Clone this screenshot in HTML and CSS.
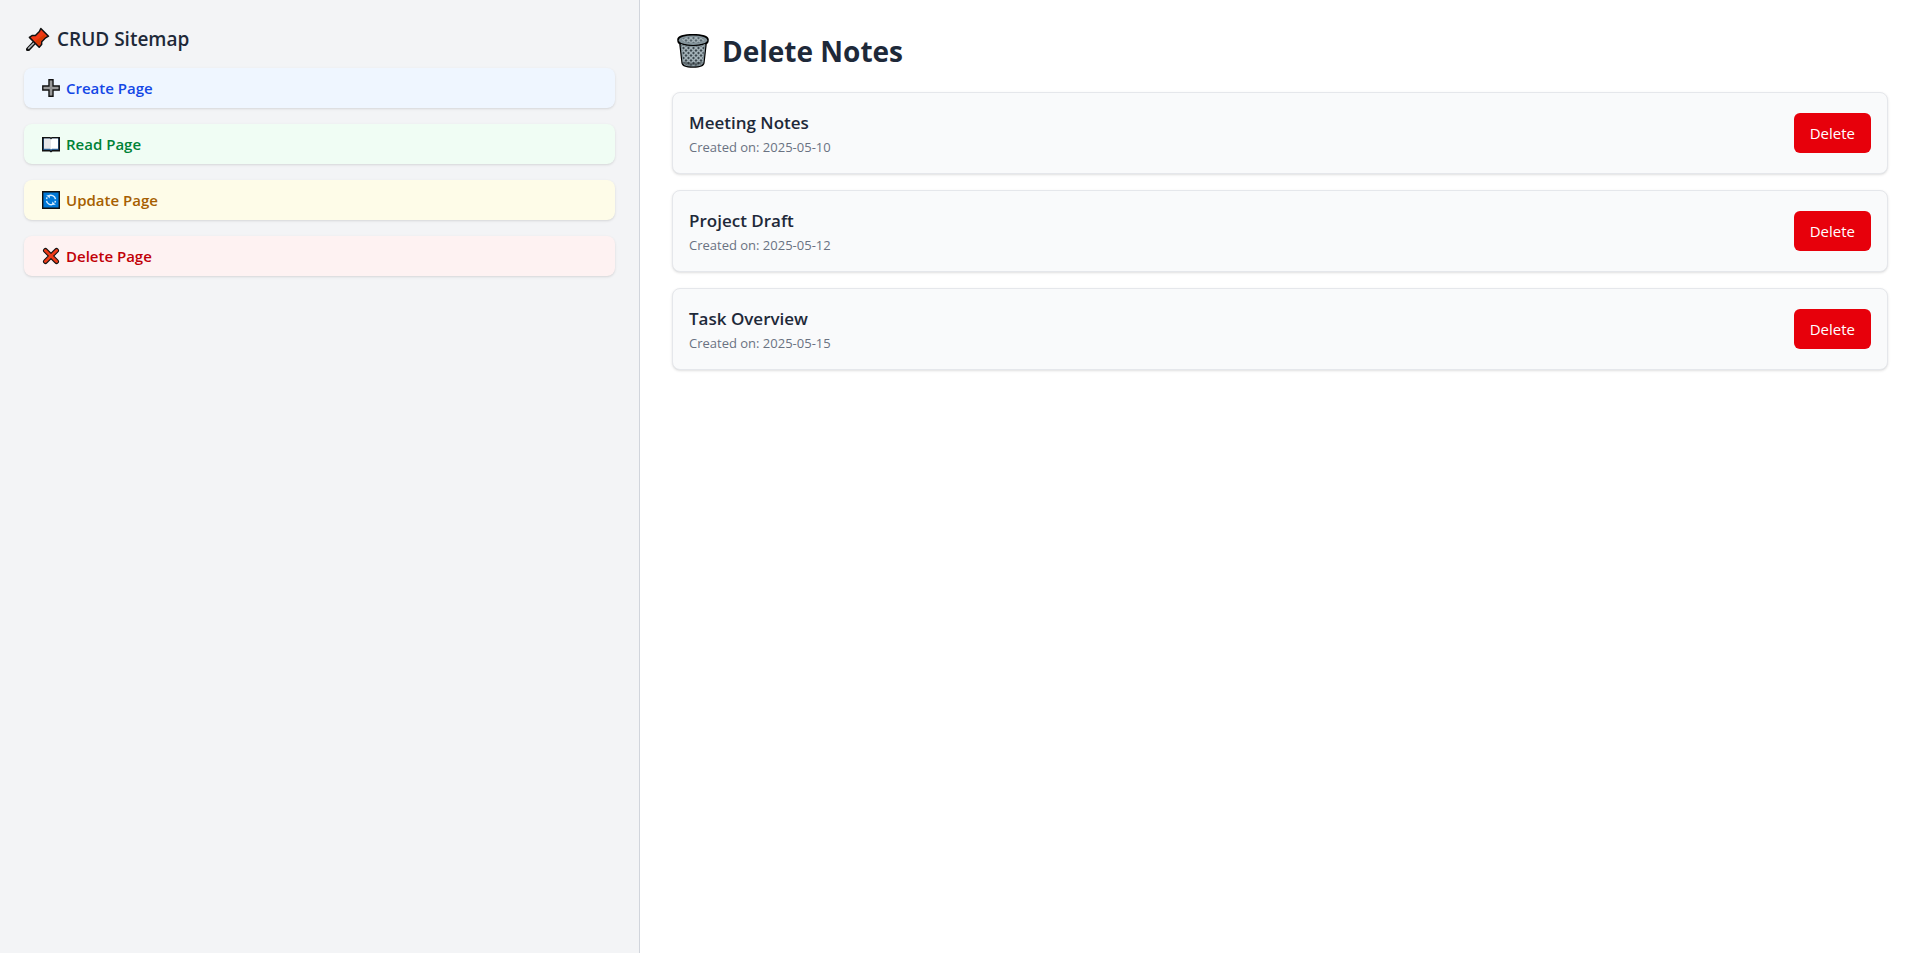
FILE: index.html
```html
<!DOCTYPE html>
<html lang="en">
<head>
<meta charset="utf-8">
<meta name="viewport" content="width=device-width, initial-scale=1">
<title>Delete Notes</title>
<link rel="stylesheet" href="styles.css">
</head>
<body>
<div class="layout">
  <aside class="sidebar">
    <h2 class="sidebar-title">
      <svg class="icon-pin" viewBox="0 0 24 24" aria-hidden="true">
        <path d="M2 22.3 8.6 15.3" stroke="#111" stroke-width="4" stroke-linecap="round"/>
        <path d="M2.2 21.8 8.6 15.3" stroke="#b8bcc0" stroke-width="1.6"/>
        <path d="M14.8 1.5 22.5 9.2 19.6 10.8 15.7 14.8 15.6 17.6 13.2 20.2 3.4 10.4 6.4 8.4 9.4 8.6 13.4 4.5Z" fill="#f03a17" stroke="#111" stroke-width="1.5" stroke-linejoin="round"/>
        <path d="M18.3 7.4 19.4 9.4 14.5 14 14.3 17 13 18.2 9.2 14.3Z" fill="#d83b01"/>
      </svg>
      CRUD Sitemap
    </h2>
    <nav class="nav">
      <a class="nav-link nav-create" href="#create">
        <svg class="icon" viewBox="0 0 18 18" aria-hidden="true">
          <path d="M7 .8h4V7h6.2v4H11v6.2H7V11H.8V7H7Z" fill="#a6a6a6" stroke="#111" stroke-width="1.4"/>
          <path d="M9 2v14M2 9h14" stroke="#8a8a8a" stroke-width="1"/>
        </svg>
        Create Page
      </a>
      <a class="nav-link nav-read" href="#read">
        <svg class="icon" viewBox="0 0 18 18" aria-hidden="true">
          <path d="M.7 2.7H8L9 3.5 10 2.7h7.3v13H10.3L9 16.7 7.7 15.7H.7Z" fill="#2b5f94" stroke="#111" stroke-width="1.4"/>
          <path d="M2 3.5h6L9 4.400v10l-1-.6H2Z" fill="#e6e6e8"/>
          <path d="M9 4.400 10 3.500h6v10.300h-6l-1 .6Z" fill="#fff"/>
        </svg>
        Read Page
      </a>
      <a class="nav-link nav-update" href="#update">
        <svg class="icon" viewBox="0 0 18 18" aria-hidden="true">
          <path d="M.7.7h16.600v16.600H.7Z" fill="#0078d7" stroke="#111" stroke-width="1.4"/>
          <g fill="none" stroke="#d5ecff" stroke-width="1.4">
            <path d="M6.300 5.200A4.600 4.600 0 0 1 13.500 8.200M11.700 12.800A4.600 4.600 0 0 1 4.500 9.800"/>
            <path d="M4.600 8.200A4.600 4.600 0 0 1 5.200 6.400M13.400 9.800A4.600 4.600 0 0 1 12.800 11.600"/>
          </g>
          <path d="M4.200 4.200h3.600v3.400ZM13.800 13.800h-3.600v-3.400Z" fill="#d5ecff"/>
        </svg>
        Update Page
      </a>
      <a class="nav-link nav-delete" href="#delete">
        <svg class="icon" viewBox="0 0 18 18" aria-hidden="true">
          <path d="M3.500 3.500 14.500 14.500M14.500 3.500 3.500 14.500" stroke="#111" stroke-width="5" stroke-linecap="round"/>
          <path d="M3.400 3.400 14.600 14.600M14.600 3.400 3.400 14.600" stroke="#ec3a17" stroke-width="2.800" stroke-linecap="round"/>
        </svg>
        Delete Page
      </a>
    </nav>
  </aside>
  <main class="main">
    <h1 class="title">
      <svg class="icon-bin" viewBox="0 0 34 36" aria-hidden="true">
        <defs>
          <pattern id="mesh" width="5" height="5" patternUnits="userSpaceOnUse">
            <path d="M0 0 5 5M5 0 0 5" stroke="#a3b1b7" stroke-width="1.500"/>
          </pattern>
        </defs>
        <path d="M1.200 6.500C1.200 2.600 8 1 17 1s15.800 1.600 15.800 5.500c0 2.500-.6 4-2 4.600L28.600 30c-.3 3.200-4 4.700-11.600 4.700S5.700 33.200 5.400 30L3.200 11.100c-1.400-.6-2-2.100-2-4.600Z" fill="#000"/>
        <path d="M5 11.500C8 13 12 13.500 17 13.500s9-.5 12-2L27 29.600c-.3 2.600-4 3.400-10 3.400s-9.700-.8-10-3.400Z" fill="#3d484e"/>
        <path d="M5 11.500C8 13 12 13.500 17 13.500s9-.5 12-2L27 29.600c-.3 2.600-4 3.400-10 3.400s-9.700-.8-10-3.400Z" fill="url(#mesh)" stroke="#84949b" stroke-width="1"/>
        <path d="M8 28.500c3 1.500 15 1.500 18 0l-.4 2.200c-2 1.800-15.200 1.800-17.200 0Z" fill="#222a2e" opacity=".5"/>
        <ellipse cx="17" cy="7.200" rx="14.200" ry="4.800" fill="#84949b"/>
        <ellipse cx="17" cy="6.800" rx="11.500" ry="3" fill="#58666d"/>
        <ellipse cx="17" cy="6.800" rx="11.500" ry="3" fill="url(#mesh)"/>
      </svg>
      Delete Notes
    </h1>
    <ul class="notes">
      <li class="note">
        <div>
          <h3 class="note-title">Meeting Notes</h3>
          <p class="note-date">Created on: 2025-05-10</p>
        </div>
        <button class="delete-button" type="button">Delete</button>
      </li>
      <li class="note">
        <div>
          <h3 class="note-title">Project Draft</h3>
          <p class="note-date">Created on: 2025-05-12</p>
        </div>
        <button class="delete-button" type="button">Delete</button>
      </li>
      <li class="note">
        <div>
          <h3 class="note-title">Task Overview</h3>
          <p class="note-date">Created on: 2025-05-15</p>
        </div>
        <button class="delete-button" type="button">Delete</button>
      </li>
    </ul>
  </main>
</div>
</body>
</html>
```
FILE: styles.css
```css
*,
*::before,
*::after {
  box-sizing: border-box;
}

body,
h1,
h2,
h3,
p,
ul {
  margin: 0;
  padding: 0;
}

body {
  font-family: "Open Sans", "Noto Sans", sans-serif;
  font-size: 16px;
  line-height: 24px;
  color: #1e2939;
  background: #fff;
}

svg {
  flex: none;
  fill: none;
}

.layout {
  display: flex;
  min-height: 100vh;
}

.sidebar {
  flex: none;
  width: 33.3333%;
  padding: 24px;
  background: #f3f4f6;
  border-right: 1px solid #d1d5dc;
}

.sidebar-title {
  display: flex;
  align-items: center;
  gap: 7px;
  margin-bottom: 14px;
  padding-left: 2px;
  font-size: 19px;
  font-weight: 600;
  line-height: 30px;
}

.icon-pin {
  width: 24px;
  height: 24px;
}

.nav {
  display: flex;
  flex-direction: column;
  gap: 16px;
}

.nav-link {
  display: flex;
  align-items: center;
  gap: 6px;
  padding: 8px 18px;
  border-radius: 8px;
  box-shadow: 0 1px 3px rgb(0 0 0 / 0.1), 0 1px 2px -1px rgb(0 0 0 / 0.1);
  font-size: 15px;
  font-weight: 600;
  text-decoration: none;
}

.icon {
  width: 18px;
  height: 18px;
}

.nav-create {
  color: #1447e6;
  background: #eff6ff;
}

.nav-read {
  color: #008236;
  background: #f0fdf4;
}

.nav-update {
  color: #a65f00;
  background: #fefce8;
}

.nav-delete {
  color: #c10007;
  background: #fef2f2;
}

.main {
  flex: 1;
  padding: 32px;
}

.title {
  display: flex;
  align-items: center;
  gap: 12px;
  margin-bottom: 22px;
  padding-left: 4px;
  font-size: 28px;
  font-weight: 700;
  line-height: 38px;
}

.icon-bin {
  width: 34px;
  height: 36px;
}

.notes {
  display: flex;
  flex-direction: column;
  gap: 16px;
  list-style: none;
}

.note {
  display: flex;
  align-items: center;
  justify-content: space-between;
  padding: 16px;
  background: #f9fafb;
  border: 1px solid #e5e7eb;
  border-radius: 8px;
  box-shadow: 0 1px 3px rgb(0 0 0 / 0.1), 0 1px 2px -1px rgb(0 0 0 / 0.1);
}

.note-title {
  font-size: 17px;
  font-weight: 600;
  line-height: 28px;
}

.note-date {
  font-size: 13px;
  line-height: 20px;
  color: #6a7282;
}

.delete-button {
  padding: 8px 16px;
  border: 0;
  border-radius: 6px;
  background: #e7000b;
  color: #fff;
  font-family: inherit;
  font-size: 15px;
  line-height: 24px;
  cursor: pointer;
}
```
